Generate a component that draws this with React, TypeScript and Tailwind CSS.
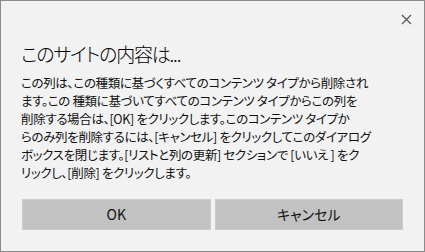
import React from "react";

const lines = [
  "この列は、この種類に基づくすべてのコンテンツ タイプから削除され",
  "ます。この 種類に基づいてすべてのコンテンツ タイプからこの列を",
  "削除する場合は、[OK] をクリックします。このコンテンツ タイプか",
  "らのみ列を削除するには、[キャンセル] をクリックしてこのダイアログ",
  "ボックスを閉じます。[リストと列の更新] セクションで [いいえ ] をク",
  "リックし、[削除] をクリックします。",
];

export default function App() {
  return (
    <div
      className="w-[425px] h-[252px] border border-[#8a8a8a] bg-[#f2f2f2] text-black flex flex-col [font-feature-settings:'palt']"
      style={{ fontFamily: '"Noto Sans CJK JP", "Noto Sans", sans-serif' }}
    >
      <div className="flex justify-end pt-[13px] pr-[11px] h-[30px]">
        <svg width="11" height="11" viewBox="0 0 11 11" className="mr-[1px]">
          <path d="M1 1 L10 10 M10 1 L1 10" stroke="#555" strokeWidth="1.2" />
        </svg>
      </div>
      <div className="pl-[20px] pt-[9px] text-[19px] leading-[28px] font-light tracking-[-1.2px]">このサイトの内容は...</div>
      <div className="pl-[20px] pt-[6px] text-[12.5px] leading-[18px] tracking-[-0.35px] text-[#111]">
        {lines.map((l, i) => (
          <div key={i} className="whitespace-pre">{l}</div>
        ))}
      </div>
      <div className="flex gap-[4px] px-[21px] mt-[17px]">
        <button className="w-[189px] h-[31px] bg-[#c2c2c2] border border-[#cccccc] text-[14px] text-[#111]">OK</button>
        <button className="w-[189px] h-[31px] bg-[#c2c2c2] border border-[#cccccc] text-[14px] text-[#111]">キャンセル</button>
      </div>
    </div>
  );
}
